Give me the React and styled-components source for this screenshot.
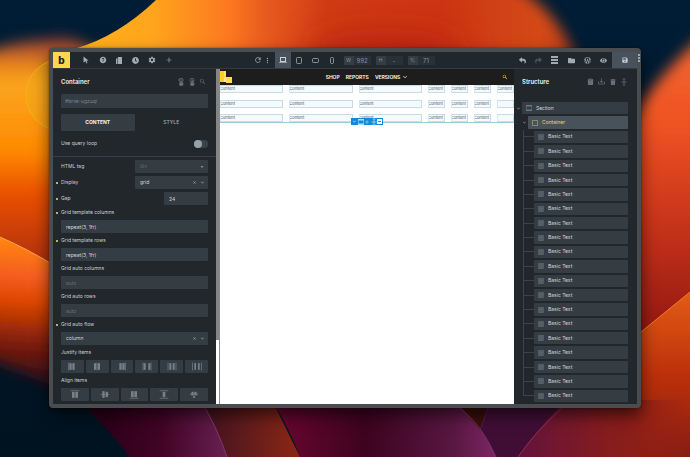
import styled, { createGlobalStyle } from "styled-components";
import {
  IoIosArrowDown,
  IoMdAdd,
  IoMdArrowDropdown,
  IoMdClose,
  IoMdHelpCircle,
  IoMdMore,
  IoMdRefresh,
  IoMdSearch,
  IoMdSettings,
} from "react-icons/io";
import {
  FaClipboard,
  FaClock,
  FaEye,
  FaFolder,
  FaReply,
  FaSave,
  FaShare,
  FaTrash,
  FaWordpressSimple,
} from "react-icons/fa";

const GlobalStyle = createGlobalStyle`
  * {
    box-sizing: border-box;
  }
  body {
    margin: 0;
    background: #001a30;
    font-family: Inter, "Liberation Sans", sans-serif;
    font-size: 5px;
    line-height: 7px;
  }
  button, input, select {
    margin: 0;
    padding: 0;
    border: 0;
    border-radius: 0;
    background: none;
    color: inherit;
    font: inherit;
    outline: none;
  }
  svg {
    display: block;
    flex: none;
  }
`;

const Desktop = styled.div`
  display: flex;
  position: relative;
  min-height: 100vh;
  padding: 48px 49px 49px;
`;
const Wallpaper = styled.svg`
  position: absolute;
  z-index: -1;
  inset: 0;
  width: 100%;
  height: 100%;
`;
const Window = styled.div`
  display: flex;
  flex-direction: column;
  flex: 1;
  min-width: 0;
  position: relative;
  border: 4px solid #4a4d4f;
  border-radius: 4px;
  background: #21272b;
  box-shadow: 0 7px 16px rgba(0, 0, 0, 0.6), 0 0 2px rgba(0, 0, 0, 0.5);
`;
const FrameMenu = styled.span`
  display: grid;
  gap: 1px;
  position: absolute;
  top: 2px;
  right: -3px;
  i {
    width: 2px;
    height: 2px;
    background: #a5a8aa;
  }
`;

const Toolbar = styled.header`
  display: flex;
  justify-content: space-between;
  height: 17px;
  border-bottom: 1px solid #343b40;
  background: #21282d;
  color: #a3abb2;
`;
const ToolGroup = styled.div`
  display: flex;
  align-items: stretch;
`;
const ToolGrid = styled.div`
  display: grid;
  grid-template-columns: repeat(${(p) => p.$count}, 1fr);
  width: ${(p) => p.$width}px;
  margin-left: ${(p) => p.$offset || 0}px;
`;
const Logo = styled.a`
  display: flex;
  align-items: center;
  justify-content: center;
  width: 17px;
  background: #ffd64f;
  color: #1d1d1d;
  font-size: 10px;
  font-weight: 800;
  text-decoration: none;
`;
const ToolButton = styled.button`
  display: flex;
  align-items: center;
  justify-content: center;
  background: ${(p) => (p.$active ? "#48525d" : "none")};
  color: ${(p) => (p.$active ? "#c9d1d9" : p.$muted ? "#4a5259" : "inherit")};
`;
const SmallTool = styled(ToolButton)`
  width: 9px;
`;
const SaveButton = styled(ToolButton)`
  width: 25px;
`;
const Sizes = styled.div`
  display: flex;
  align-items: center;
  gap: 5px;
  padding: 0 3px;
`;
const SizeBox = styled.div`
  display: flex;
  width: 27px;
  height: 9px;
  border-radius: 1px;
  background: #293036;
  color: #87929c;
  line-height: 9px;
  overflow: hidden;
  label {
    width: 10px;
    background: #343c44;
    text-align: center;
  }
  input {
    width: 17px;
    font-size: 6px;
    text-align: center;
  }
`;

const Workspace = styled.main`
  display: flex;
  flex: 1;
  min-height: 0;
`;
const Panel = styled.aside`
  flex: none;
  display: flex;
  flex-direction: column;
  width: ${(p) => p.$width}px;
  color: #cdd2d6;
`;
const PanelHead = styled.div`
  display: flex;
  align-items: center;
  justify-content: space-between;
  height: 25px;
  padding: 0 ${(p) => p.$right}px 0 8px;
  color: #667079;
  h2 {
    margin: 0;
    color: #eef1f3;
    font-size: 6px;
    font-weight: 600;
  }
`;
const HeadIcons = styled.div`
  display: flex;
  gap: 4px;
  button {
    display: flex;
    align-items: center;
    justify-content: center;
    width: 7px;
  }
`;
const Identity = styled.div`
  display: flex;
  flex-direction: column;
  gap: 6px;
  padding: 0 8px;
`;
const TextInput = styled.input`
  width: ${(p) => (p.$width ? `${p.$width}px` : "100%")};
  height: ${(p) => p.$height || 13}px;
  padding: 0 5px;
  border-radius: 1px;
  background: #343c44;
  color: #d3d8dc;
  &::placeholder {
    color: #65707a;
    opacity: 1;
  }
`;
const IdInput = styled(TextInput)`
  padding: 0 4px;
  color: #7a858f;
`;
const Tabs = styled.div`
  display: grid;
  grid-template-columns: 1fr 1fr;
  height: 17px;
`;
const Tab = styled.button`
  border-radius: 1px;
  background: ${(p) => (p.$active ? "#343c44" : "none")};
  color: ${(p) => (p.$active ? "#f2f4f6" : "#a5adb5")};
  font-weight: ${(p) => (p.$active ? 700 : 500)};
`;
const QueryLoop = styled.div`
  display: flex;
  align-items: center;
  justify-content: space-between;
  height: 26px;
  padding: 0 8px;
  border-bottom: 1px solid #3a4146;
`;
const Toggle = styled.input.attrs({ type: "checkbox" })`
  appearance: none;
  display: flex;
  width: 14px;
  height: 8px;
  border-radius: 4px;
  background: #3a434c;
  &::before {
    content: "";
    width: 8px;
    height: 8px;
    border-radius: 50%;
    background: #98a0ac;
  }
`;
const Controls = styled.div`
  display: flex;
  flex-direction: column;
  padding: 3px 8px 3px;
`;
const Rows = styled.div`
  display: grid;
  gap: 3px;
`;
const Row = styled.div`
  display: flex;
  align-items: center;
  justify-content: space-between;
`;
const Label = styled.label`
  display: flex;
  align-items: center;
  gap: 3px;
  height: ${(p) => (p.$stacked ? 15 : 13)}px;
  margin-left: -5px;
  &::before {
    content: "";
    width: 2px;
    height: 2px;
    border-radius: 1px;
    background: ${(p) => (p.$changed ? "#ffe17a" : "transparent")};
  }
`;
const SelectBox = styled.div`
  display: flex;
  align-items: center;
  gap: 3px;
  width: ${(p) => (p.$width ? `${p.$width}px` : "100%")};
  height: 13px;
  padding: 0 3px 0 5px;
  border-radius: 1px;
  background: #343c44;
  color: ${(p) => (p.$muted ? "#5d6872" : "#d3d8dc")};
  select {
    appearance: none;
    flex: 1;
    min-width: 0;
  }
  svg {
    color: #a0a9b1;
  }
`;
const ButtonSet = styled.div`
  display: flex;
  gap: 2px;
  button {
    display: flex;
    align-items: center;
    justify-content: center;
    flex: 1;
    height: 13px;
    border-radius: 1px;
    background: #343c44;
    color: #77818a;
  }
`;

const Preview = styled.section`
  display: flex;
  flex: 1;
  min-width: 0;
  background: #fff;
`;
const Splitter = styled.div`
  width: 4px;
  border-right: 1px solid #8b8b8b;
  &::before {
    content: "";
    display: block;
    height: 81%;
    background: #858585;
  }
`;
const Site = styled.div`
  flex: 1;
  min-width: 0;
`;
const SiteHeader = styled.header`
  display: flex;
  align-items: center;
  justify-content: space-between;
  height: 16px;
  padding-right: 6px;
  background: #1d1d1d;
  color: #f4d61f;
`;
const SiteNav = styled.nav`
  display: flex;
  align-items: center;
  gap: 6px;
  a {
    display: flex;
    align-items: center;
    gap: 2px;
    color: #fff;
    font-weight: 600;
    text-decoration: none;
  }
`;
const GridContainer = styled.div`
  display: grid;
  grid-template-columns: repeat(3, 1fr) repeat(4, 17px);
  grid-template-rows: repeat(3, 8px);
  grid-auto-flow: column;
  column-gap: 6px;
  align-content: space-between;
  position: relative;
  height: 38px;
  border-bottom: 1px solid #9ecbe2;
`;
const Cell = styled.div`
  border: 1px solid #c6dde8;
  border-left-color: #d8e8f0;
  background: #f5faff;
  color: #4d555d;
  font-size: 4px;
  line-height: 6px;
  text-indent: -1px;
  overflow: hidden;
`;
const ElementActions = styled.div`
  display: flex;
  align-items: center;
  justify-content: space-between;
  position: absolute;
  top: 33px;
  left: 131px;
  width: 32px;
  height: 7px;
  padding: 0 1px;
  background: #118bd8;
  color: #b5dff8;
  button {
    display: flex;
  }
`;

const Tree = styled.ul`
  display: grid;
  grid-auto-rows: 1fr;
  flex: 1;
  margin: 7px 0 0;
  padding: 0 9px 1px 1px;
  list-style: none;
`;
const TreeItem = styled.li`
  display: flex;
  padding-left: ${(p) => p.$indent}px;
`;
const Caret = styled.span`
  display: flex;
  align-items: center;
  justify-content: center;
  width: 7px;
  color: #87919a;
`;
const Branch = styled.span`
  width: 11px;
  background:
    linear-gradient(#3c444b, #3c444b) 0 0 / 1px ${(p) => (p.$last ? "50%" : "100%")} no-repeat,
    linear-gradient(#3c444b, #3c444b) 0 50% / 100% 1px no-repeat;
`;
const TreeButton = styled.button`
  display: flex;
  align-items: center;
  gap: 4px;
  flex: 1;
  margin: 1px 0;
  padding: 0 4px;
  border-radius: 1px;
  background: ${(p) => (p.$active ? "#48525b" : "#343c44")};
  color: ${(p) => (p.$active ? "#f3d365" : "#d3d8dc")};
  svg {
    color: ${(p) => (p.$active ? "#8c8669" : "#6d7780")};
  }
`;

const Background = () => (
  <Wallpaper viewBox="0 0 690 457" preserveAspectRatio="none" aria-hidden="true">
    <defs>
      <filter id="soft" x="-20%" y="-20%" width="140%" height="140%">
        <feGaussianBlur stdDeviation="7" />
      </filter>
      <filter id="hazy" x="-40%" y="-60%" width="180%" height="220%">
        <feGaussianBlur stdDeviation="16" />
      </filter>
      <linearGradient id="night" x2="0" y2="1">
        <stop offset="0" stopColor="#001d36" />
        <stop offset="1" stopColor="#001320" />
      </linearGradient>
      <linearGradient id="leftGlow" gradientUnits="userSpaceOnUse" x1="0" y1="35" x2="0" y2="275">
        <stop offset="0" stopColor="#7c2b38" />
        <stop offset="0.12" stopColor="#e6801f" />
        <stop offset="0.2" stopColor="#fba51f" />
        <stop offset="0.48" stopColor="#ff8a00" />
        <stop offset="0.66" stopColor="#ea5000" />
        <stop offset="1" stopColor="#a82a12" />
      </linearGradient>
      <linearGradient id="leftFold" gradientUnits="userSpaceOnUse" x1="10" y1="240" x2="0" y2="385">
        <stop offset="0" stopColor="#ff8410" />
        <stop offset="0.25" stopColor="#f45c20" />
        <stop offset="0.42" stopColor="#dc4600" />
        <stop offset="0.7" stopColor="#7c1c0c" />
        <stop offset="1" stopColor="#2b0a1a" />
      </linearGradient>
      <linearGradient id="crest" gradientUnits="userSpaceOnUse" x1="80" y1="0" x2="595" y2="0">
        <stop offset="0" stopColor="#ffb01c" />
        <stop offset="0.14" stopColor="#ffa51c" />
        <stop offset="0.29" stopColor="#fc7820" />
        <stop offset="0.36" stopColor="#e85a1e" />
        <stop offset="0.48" stopColor="#d03c15" />
        <stop offset="0.7" stopColor="#cc3514" />
        <stop offset="0.9" stopColor="#d44a14" />
        <stop offset="1" stopColor="#8e2a25" />
      </linearGradient>
      <linearGradient id="rightGlow" gradientUnits="userSpaceOnUse" x1="0" y1="60" x2="0" y2="330">
        <stop offset="0" stopColor="#f2602c" />
        <stop offset="0.25" stopColor="#ed5222" />
        <stop offset="0.6" stopColor="#c8341a" />
        <stop offset="1" stopColor="#941812" />
      </linearGradient>
      <linearGradient id="rightFold" gradientUnits="userSpaceOnUse" x1="0" y1="295" x2="0" y2="457">
        <stop offset="0" stopColor="#e25a16" />
        <stop offset="0.5" stopColor="#bb300a" />
        <stop offset="1" stopColor="#841c16" />
      </linearGradient>
      <linearGradient id="wine" gradientUnits="userSpaceOnUse" x1="100" y1="0" x2="225" y2="0">
        <stop offset="0" stopColor="#2a0019" />
        <stop offset="0.5" stopColor="#420425" />
        <stop offset="1" stopColor="#662050" />
      </linearGradient>
      <linearGradient id="rust" gradientUnits="userSpaceOnUse" x1="210" y1="0" x2="300" y2="0">
        <stop offset="0" stopColor="#451320" />
        <stop offset="1" stopColor="#8c2714" />
      </linearGradient>
      <linearGradient id="plum" gradientUnits="userSpaceOnUse" x1="280" y1="0" x2="495" y2="0">
        <stop offset="0" stopColor="#68062d" />
        <stop offset="0.4" stopColor="#3d0320" />
        <stop offset="0.8" stopColor="#571740" />
        <stop offset="1" stopColor="#7b2563" />
      </linearGradient>
      <linearGradient id="ember" gradientUnits="userSpaceOnUse" x1="520" y1="0" x2="690" y2="0">
        <stop offset="0" stopColor="#64133b" />
        <stop offset="0.5" stopColor="#841c1e" />
        <stop offset="0.68" stopColor="#8c1e18" />
        <stop offset="1" stopColor="#a0220f" stopOpacity="0" />
      </linearGradient>
    </defs>
    <rect width="690" height="457" fill="url(#night)" />
    <path d="M-30 60Q10 38 70 38L120 60V300H-30Z" fill="url(#leftGlow)" filter="url(#soft)" />
    <circle cx="62" cy="95" r="36" fill="#f0a818" fillOpacity=".45" stroke="#f0b616" />
    <path d="M-30 250H70V396Q30 372 -30 352Z" fill="url(#leftFold)" filter="url(#soft)" />
    <path d="M-30 200H60V269Q28 249 0 237H-30Z" fill="url(#leftGlow)" />
    <path d="M0 237Q28 249 60 269V310H0Z" fill="url(#leftFold)" />
    <path d="M0 237Q28 249 60 269" fill="none" stroke="#ffa544" />
    <path d="M170 -30H470Q560 -10 583 80H150Z" fill="url(#crest)" filter="url(#soft)" />
    <path d="M156 0Q118 36 77 48V80H480V0Z" fill="url(#crest)" />
    <ellipse cx="385" cy="52" rx="80" ry="24" fill="#b51d10" opacity=".6" filter="url(#hazy)" />
    <path d="M710 30Q655 75 625 130V350H710Z" fill="url(#rightGlow)" filter="url(#soft)" />
    <path d="M690 130V292L641 332V180Z" fill="url(#rightGlow)" />
    <path d="M690 292L630 341V457H690Z" fill="url(#rightFold)" />
    <path d="M690 292L630 341" stroke="#f57b25" />
    <path d="M78 400H205L228 457H130Q110 430 78 400Z" fill="url(#wine)" />
    <path d="M202 400H272L300 457H227Q218 430 202 400Z" fill="url(#rust)" />
    <path d="M272 400H455Q482 425 496 457H300Q290 430 272 400Z" fill="url(#plum)" />
    <path d="M455 400H490L480 430Z" fill="#3a0f0c" />
    <path d="M490 400H570L518 457H496Q488 440 480 430Z" fill="#400e35" />
    <path d="M566 400H690V457H518Q535 432 566 400Z" fill="url(#ember)" />
    <g fill="none" strokeWidth=".7">
      <path d="M205 408Q218 430 227 457M460 408Q482 425 496 457" stroke="#96427d" />
      <path d="M562 408Q535 432 518 457" stroke="#a33d5c" />
      <path d="M488 408L480 430" stroke="#66205a" />
    </g>
  </Wallpaper>
);

const CursorIcon = () => (
  <svg width="6" height="8" viewBox="0 0 12 16" fill="currentColor">
    <path d="M1 1L11 9L7 9.500L9 14L7 15L5 10.500L1 13Z" />
  </svg>
);
const PagesIcon = () => (
  <svg width="6" height="7" viewBox="0 0 12 14" fill="currentColor">
    <path d="M4 0H12V14H4ZM0 4L3 1V14H0Z" />
  </svg>
);
const DeviceIcon = ({ width, height }) => (
  <svg width={width} height={height} viewBox={`0 0 ${width} ${height}`} fill="none" stroke="currentColor">
    <rect x=".5" y=".5" width={width - 1} height={height - 1} rx="1" opacity=".8" />
  </svg>
);
const LaptopIcon = () => (
  <svg width="8" height="6" viewBox="0 0 8 6" fill="none" stroke="currentColor">
    <rect x="1.500" y=".5" width="5" height="4" />
    <path d="M0 5.500H8" opacity=".6" />
  </svg>
);
const ListIcon = () => (
  <svg width="7" height="8" viewBox="0 0 7 8" fill="currentColor">
    <path d="M0 0H7V2H0ZM0 3H7V5H0ZM0 6H7V8H0Z" />
  </svg>
);
const StateIcon = ({ link }) => (
  <svg width="6" height="8" viewBox="0 0 12 16" fill="none" stroke="currentColor" strokeWidth="1.500">
    <rect x="2" y="1" width="8" height="6" rx="2" />
    {link ? <path d="M4 4H8V8" /> : <path d="M2 4H10" />}
    <rect x="3" y="9" width="7" height="6" rx="2" fill="currentColor" />
  </svg>
);
const SaveTemplateIcon = () => (
  <svg width="7" height="7" viewBox="0 0 14 14" fill="none" stroke="currentColor" strokeWidth="1.500">
    <path d="M1 7V12H13V7M7 1V9M4 6L7 9L10 6" />
  </svg>
);
const ExpandIcon = () => (
  <svg width="6" height="8" viewBox="0 0 12 16" fill="none" stroke="currentColor" strokeWidth="1.500">
    <path d="M1 8H11M6 1V15M4 3L6 1L8 3M4 13L6 15L8 13" />
  </svg>
);
const SectionIcon = () => (
  <svg width="6" height="6" viewBox="0 0 12 12" fill="currentColor">
    <path d="M0 0H12V3H0ZM0 9H12V12H0ZM0 3H1V9H0ZM11 3H12V9H11Z" />
  </svg>
);
const ContainerIcon = () => (
  <svg width="6" height="6" viewBox="0 0 6 6" fill="none" stroke="currentColor">
    <rect x=".5" y=".5" width="5" height="5" />
  </svg>
);
const TextIcon = () => (
  <svg width="6" height="6" viewBox="0 0 12 12">
    <rect width="12" height="12" fill="#505962" />
    <path d="M1 2H11M1 5H11M1 8H11M1 11H8" stroke="currentColor" opacity=".6" />
  </svg>
);
const SiteLogo = () => (
  <svg width="12" height="12" viewBox="0 0 12 12">
    <path d="M0 0H6V11H0Z" fill="#fbcf2b" />
    <path d="M4 0H6V5H4Z" fill="#ffe36e" />
    <path d="M6 6H12V12H6Z" fill="#ffdc4a" />
    <path d="M4 6H6V11H4Z" fill="#ffe88a" />
  </svg>
);

// each glyph is a list of [x, y, width, height] bars on a 24 x 24 grid
const justifyGlyphs = {
  start: [[0, 0, 2, 24], [4, 2, 7, 20], [13, 2, 7, 20]],
  center: [[3, 2, 7, 20], [11, 0, 2, 24], [14, 2, 7, 20]],
  end: [[4, 2, 7, 20], [13, 2, 7, 20], [22, 0, 2, 24]],
  "space-between": [[-1, 0, 2, 24], [2, 2, 6, 20], [16, 2, 6, 20], [23, 0, 2, 24]],
  "space-around": [[-1, 0, 2, 24], [4, 2, 6, 20], [14, 2, 6, 20], [23, 0, 2, 24]],
  "space-evenly": [[-2, 0, 2, 24], [4, 2, 5, 20], [15, 2, 5, 20], [24, 0, 2, 24]],
};
const alignGlyphs = {
  start: [[-1, 0, 26, 2], [3, 4, 8, 18], [13, 4, 8, 18]],
  center: [[-1, 11, 26, 2], [4, 2, 7, 20], [14, 4, 7, 16]],
  end: [[-1, 22, 26, 2], [3, 2, 8, 18], [13, 2, 8, 18]],
  stretch: [[-1, 0, 26, 2], [8, 4, 8, 16], [-1, 22, 26, 2]],
  baseline: [[-1, 10, 26, 2], [4, 4, 7, 11], [13, 4, 7, 11], [9, 17, 6, 5]],
};

const BarGlyph = ({ bars }) => (
  <svg width="10" height="9" viewBox="-3 -1 30 26" fill="currentColor">
    {bars.map(([x, y, width, height]) => (
      <rect key={`${x}-${y}`} x={x} y={y} width={width} height={height} />
    ))}
  </svg>
);

const GlyphButtons = ({ title, glyphs }) => (
  <>
    <Label as="span" $stacked>{title}</Label>
    <ButtonSet role="group" aria-label={title}>
      {Object.entries(glyphs).map(([name, bars]) => (
        <button key={name} type="button" aria-label={name}>
          <BarGlyph bars={bars} />
        </button>
      ))}
    </ButtonSet>
  </>
);

const textFields = [
  { id: "grid-columns", label: "Grid template columns", value: "repeat(3, 1fr)" },
  { id: "grid-rows", label: "Grid template rows", value: "repeat(3, 1fr)" },
  { id: "auto-columns", label: "Grid auto columns" },
  { id: "auto-rows", label: "Grid auto rows" },
];

const sizes = [
  { id: "width", label: "W", value: "992" },
  { id: "height", label: "H", value: "-" },
  { id: "scale", label: "%", value: "71" },
];

const TopBar = () => (
  <Toolbar>
    <ToolGroup>
      <Logo href="#">b</Logo>
      <ToolGrid $count={6} $width={99} $offset={8}>
        <ToolButton aria-label="Select"><CursorIcon /></ToolButton>
        <ToolButton aria-label="Help"><IoMdHelpCircle size={8} /></ToolButton>
        <ToolButton aria-label="Pages"><PagesIcon /></ToolButton>
        <ToolButton aria-label="History"><FaClock size={7} /></ToolButton>
        <ToolButton aria-label="Settings"><IoMdSettings size={8} /></ToolButton>
        <ToolButton aria-label="Add"><IoMdAdd size={8} /></ToolButton>
      </ToolGrid>
    </ToolGroup>
    <ToolGroup>
      <SmallTool aria-label="Reload"><IoMdRefresh size={8} /></SmallTool>
      <SmallTool aria-label="More"><IoMdMore size={9} /></SmallTool>
      <ToolGrid $count={4} $width={66} $offset={3}>
        <ToolButton $active aria-label="Desktop"><LaptopIcon /></ToolButton>
        <ToolButton aria-label="Tablet"><DeviceIcon width={6} height={7} /></ToolButton>
        <ToolButton aria-label="Mobile landscape"><DeviceIcon width={7} height={5} /></ToolButton>
        <ToolButton aria-label="Mobile"><DeviceIcon width={4} height={7} /></ToolButton>
      </ToolGrid>
      <Sizes>
        {sizes.map((s) => (
          <SizeBox key={s.id}>
            <label htmlFor={s.id}>{s.label}</label>
            <input id={s.id} defaultValue={s.value} />
          </SizeBox>
        ))}
      </Sizes>
    </ToolGroup>
    <ToolGroup>
      <ToolGrid $count={6} $width={98}>
        <ToolButton aria-label="Undo"><FaReply size={7} /></ToolButton>
        <ToolButton $muted aria-label="Redo"><FaShare size={7} /></ToolButton>
        <ToolButton aria-label="Structure"><ListIcon /></ToolButton>
        <ToolButton aria-label="Templates"><FaFolder size={7} /></ToolButton>
        <ToolButton aria-label="WordPress"><FaWordpressSimple size={7} /></ToolButton>
        <ToolButton aria-label="Preview"><FaEye size={7} /></ToolButton>
      </ToolGrid>
      <SaveButton $active aria-label="Save"><FaSave size={6} /></SaveButton>
    </ToolGroup>
  </Toolbar>
);

const SettingsPanel = () => (
  <Panel $width={163}>
    <PanelHead $right={10}>
      <h2>Container</h2>
      <HeadIcons>
        <button aria-label="Classes"><StateIcon /></button>
        <button aria-label="States"><StateIcon link /></button>
        <button aria-label="Search"><IoMdSearch size={7} /></button>
      </HeadIcons>
    </PanelHead>
    <Identity>
      <IdInput aria-label="Element ID" defaultValue="#brxe-ugzuqi" $height={14} />
      <Tabs>
        <Tab $active>CONTENT</Tab>
        <Tab>STYLE</Tab>
      </Tabs>
    </Identity>
    <QueryLoop>
      <label htmlFor="query-loop">Use query loop</label>
      <Toggle id="query-loop" />
    </QueryLoop>
    <Controls>
      <Rows>
        <Row>
          <Label htmlFor="tag">HTML tag</Label>
          <SelectBox $width={73} $muted>
            <select id="tag"><option>div</option></select>
            <IoMdArrowDropdown size={6} />
          </SelectBox>
        </Row>
        <Row>
          <Label htmlFor="display" $changed>Display</Label>
          <SelectBox $width={73}>
            <select id="display"><option>grid</option></select>
            <IoMdClose size={5} />
            <IoIosArrowDown size={5} />
          </SelectBox>
        </Row>
        <Row>
          <Label htmlFor="gap" $changed>Gap</Label>
          <TextInput id="gap" defaultValue="24" $width={44} />
        </Row>
      </Rows>
      {textFields.map((f) => (
        <div key={f.id}>
          <Label htmlFor={f.id} $stacked $changed={!!f.value}>{f.label}</Label>
          <Row>
            <TextInput id={f.id} defaultValue={f.value} placeholder="auto" />
          </Row>
        </div>
      ))}
      <Label htmlFor="auto-flow" $stacked $changed>Grid auto flow</Label>
      <SelectBox>
        <select id="auto-flow"><option>column</option></select>
        <IoMdClose size={5} />
        <IoIosArrowDown size={5} />
      </SelectBox>
      <GlyphButtons title="Justify items" glyphs={justifyGlyphs} />
      <GlyphButtons title="Align items" glyphs={alignGlyphs} />
    </Controls>
  </Panel>
);

const Canvas = () => (
  <Preview>
    <Splitter />
    <Site>
      <SiteHeader>
        <SiteLogo />
        <SiteNav>
          <a href="#">SHOP</a>
          <a href="#">REPORTS</a>
          <a href="#">VERSIONS <IoIosArrowDown size={6} /></a>
        </SiteNav>
        <IoMdSearch size={6} />
      </SiteHeader>
      <GridContainer>
        {Array.from({ length: 21 }, (_, i) => (
          <Cell key={i}>{i < 19 && "Content"}</Cell>
        ))}
        <ElementActions>
          <button aria-label="Parent"><IoIosArrowDown size={5} /></button>
          <button aria-label="Section"><SectionIcon /></button>
          <button aria-label="Add"><IoMdAdd size={6} /></button>
          <button aria-label="Move"><ExpandIcon /></button>
          <button aria-label="Container">
            <svg width="5" height="5" viewBox="0 0 5 5">
              <rect width="5" height="5" fill="#fff" />
              <path d="M1 2.500H4" stroke="#118bd8" />
            </svg>
          </button>
        </ElementActions>
      </GridContainer>
    </Site>
  </Preview>
);

const StructurePanel = () => (
  <Panel $width={123}>
    <PanelHead $right={10}>
      <h2>Structure</h2>
      <HeadIcons>
        <button aria-label="Paste"><FaClipboard size={7} /></button>
        <button aria-label="Save template"><SaveTemplateIcon /></button>
        <button aria-label="Delete"><FaTrash size={6} /></button>
        <button aria-label="Expand all"><ExpandIcon /></button>
      </HeadIcons>
    </PanelHead>
    <Tree>
      <TreeItem $indent={0}>
        <Caret><IoIosArrowDown size={5} /></Caret>
        <TreeButton><SectionIcon />Section</TreeButton>
      </TreeItem>
      <TreeItem $indent={6}>
        <Caret><IoIosArrowDown size={5} /></Caret>
        <TreeButton $active><ContainerIcon />Container</TreeButton>
      </TreeItem>
      {Array.from({ length: 19 }, (_, i) => (
        <TreeItem key={i} $indent={8}>
          <Branch $last={i === 18} />
          <TreeButton><TextIcon />Basic Text</TreeButton>
        </TreeItem>
      ))}
    </Tree>
  </Panel>
);

const App = () => {
  return (
    <>
      <GlobalStyle />
      <Desktop>
        <Background />
        <Window>
          <FrameMenu><i /><i /><i /></FrameMenu>
          <TopBar />
          <Workspace>
            <SettingsPanel />
            <Canvas />
            <StructurePanel />
          </Workspace>
        </Window>
      </Desktop>
    </>
  );
};

export default App;
